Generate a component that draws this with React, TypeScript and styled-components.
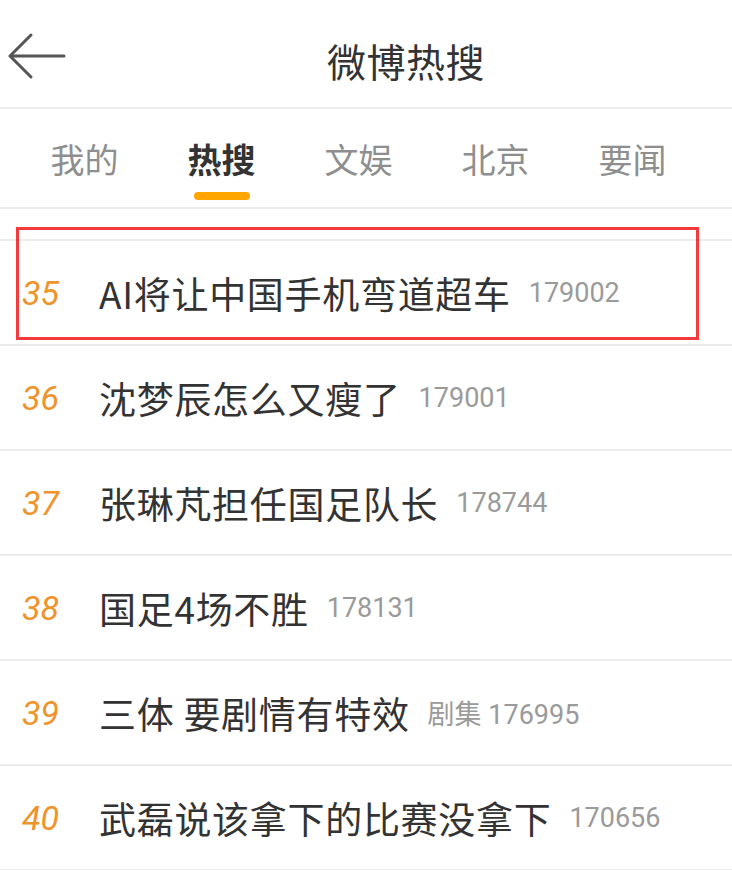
import styled, { createGlobalStyle } from "styled-components";

const GlobalStyle = createGlobalStyle`
    body {
        margin: 0;
        background: #fff;
        font-family: "Noto Sans CJK SC", "Noto Sans", sans-serif;
    }
`;

const Page = styled.div`
    width: 732px;
    height: 870px;
    overflow: hidden;
    background: #fff;
`;

const Header = styled.header`
    display: grid;
    grid-template-columns: 80px 1fr 0;
    align-items: center;
    height: 107px;
    border-bottom: 2px solid #ececec;
`;

const BackButton = styled.button`
    display: flex;
    align-self: center;
    margin-top: 4px;
    padding: 0 0 0 6px;
    border: 0;
    background: none;
`;

const Title = styled.h1`
    margin: 12px 0 0;
    text-align: center;
    font-size: 39px;
    line-height: 48px;
    font-weight: 400;
    color: #333;
    letter-spacing: 0.5px;
`;

const TabBar = styled.nav`
    display: grid;
    grid-template-columns: repeat(5, 137px);
    padding-left: 16px;
    height: 98px;
    border-bottom: 2px solid #ececec;
`;

const Tab = styled.div<{ $active?: boolean }>`
    display: flex;
    flex-direction: column;
    align-items: center;
    padding-top: 30px;
    font-size: 34px;
    line-height: 40px;
    font-weight: ${(p) => (p.$active ? 700 : 400)};
    color: ${(p) => (p.$active ? "#333" : "#8e8e8e")};
`;

const Underline = styled.span`
    width: 56px;
    height: 8px;
    margin-top: 13px;
    border-radius: 4px;
    background: #ffa500;
`;

const ListWrap = styled.div`
    position: relative;
    padding-top: 30px;
`;

const List = styled.ul`
    margin: 0;
    padding: 0;
    list-style: none;
    border-top: 2px solid #ececec;
`;

const Row = styled.li`
    display: flex;
    align-items: center;
    height: 103px;
    border-bottom: 2px solid #ececec;
`;

const Rank = styled.span`
    width: 77px;
    padding-left: 22px;
    font-family: Roboto, "Liberation Sans", sans-serif;
    font-style: italic;
    font-size: 34px;
    color: #f0932b;
`;

const Word = styled.span`
    font-size: 37px;
    letter-spacing: 0.7px;
    color: #333;
`;

const Count = styled.span`
    margin-left: 18px;
    font-family: Roboto, "Noto Sans CJK SC", sans-serif;
    font-size: 27px;
    color: #9a9a9a;
`;

const Highlight = styled.div`
    position: absolute;
    top: 18px;
    left: 16px;
    width: 683px;
    height: 113px;
    box-sizing: border-box;
    border: 3px solid #f43a3a;
    pointer-events: none;
`;

const tabs = ["我的", "热搜", "文娱", "北京", "要闻"];

const items = [
    { rank: 35, word: "AI将让中国手机弯道超车", count: "179002" },
    { rank: 36, word: "沈梦辰怎么又瘦了", count: "179001" },
    { rank: 37, word: "张琳芃担任国足队长", count: "178744" },
    { rank: 38, word: "国足4场不胜", count: "178131" },
    { rank: 39, word: "三体 要剧情有特效", count: "剧集 176995" },
    { rank: 40, word: "武磊说该拿下的比赛没拿下", count: "170656" },
];

const BackArrow = () => (
    <svg width="62" height="48" viewBox="0 0 62 48" fill="none">
        <path
            d="M4 24 H58 M25 3 L4 24 L25 45"
            stroke="#555"
            strokeWidth="3"
            strokeLinecap="round"
            strokeLinejoin="round"
        />
    </svg>
);

export default function App() {
    return (
        <Page>
            <GlobalStyle />
            <Header>
                <BackButton aria-label="返回">
                    <BackArrow />
                </BackButton>
                <Title>微博热搜</Title>
                <span />
            </Header>
            <TabBar>
                {tabs.map((t) => (
                    <Tab key={t} $active={t === "热搜"}>
                        {t}
                        {t === "热搜" && <Underline />}
                    </Tab>
                ))}
            </TabBar>
            <ListWrap>
                <List>
                    {items.map((it) => (
                        <Row key={it.rank}>
                            <Rank>{it.rank}</Rank>
                            <Word>{it.word}</Word>
                            <Count>{it.count}</Count>
                        </Row>
                    ))}
                </List>
                <Highlight />
            </ListWrap>
        </Page>
    );
}
